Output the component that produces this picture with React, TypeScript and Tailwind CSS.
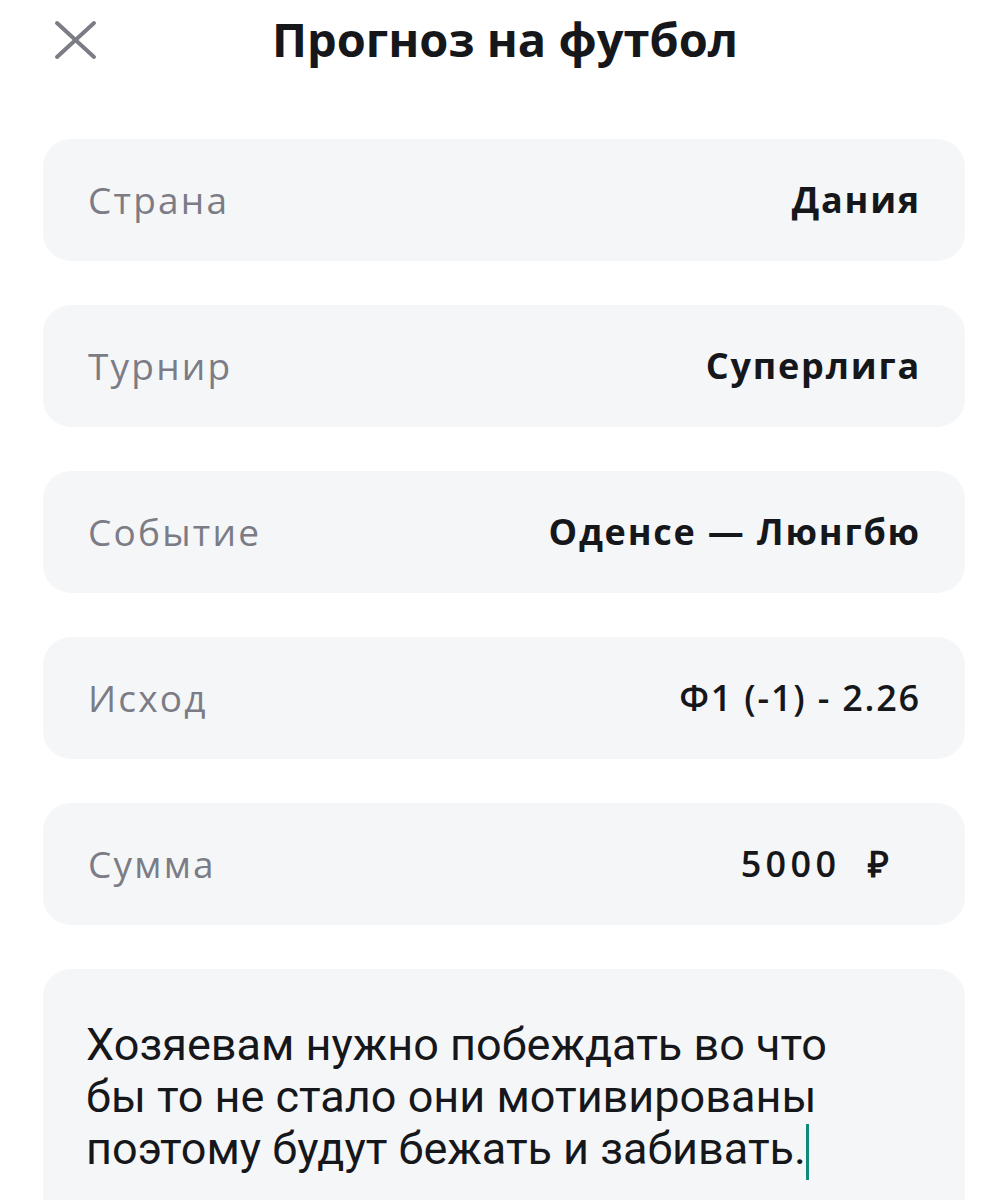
import React from "react";

const rows = [
    { label: "Страна", value: "Дания", weight: "font-bold" },
    { label: "Турнир", value: "Суперлига", weight: "font-bold" },
    { label: "Событие", value: "Оденсе — Люнгбю", weight: "font-bold" },
    { label: "Исход", value: "Ф1 (-1) - 2.26", weight: "font-semibold" },
    { label: "Сумма", value: "5000\u00a0\u00a0₽", weight: "font-semibold", pad: true },
];

const CloseIcon = () => (
    <svg width="46" height="40" viewBox="0 0 46 40" fill="none" stroke="#7b7c85" strokeWidth="4" strokeLinecap="round">
        <path d="M4 3 L41 37" />
        <path d="M41 3 L4 37" />
    </svg>
);

export default function App() {
    return (
        <div className="min-h-[1200px] w-[1000px] bg-white overflow-hidden" style={{ fontFamily: '"Open Sans", sans-serif' }}>
            <div className="relative flex h-[84px] items-center justify-center">
                <button className="absolute left-[53px] top-[20px]" aria-label="Close">
                    <CloseIcon />
                </button>
                <h1 className="text-[47px] font-bold text-[#16171b] pl-[10px] mb-[6px]">Прогноз на футбол</h1>
            </div>
            <div className="flex flex-col gap-[44px] pl-[43px] pr-[35px] pt-[55px]">
                {rows.map(row => (
                    <div key={row.label} className="flex h-[122px] items-center justify-between rounded-[28px] bg-[#f5f6f8] pl-[45px] pr-[44px]">
                        <span className="text-[37px] tracking-[0.06em] text-[#7b7c85]">{row.label}</span>
                        <span className={`text-[36px] text-[#16171b] ${row.weight} ${row.pad ? "pr-[28px] tracking-[0.12em]" : "tracking-[0.05em]"}`}>{row.value}</span>
                    </div>
                ))}
                <div className="rounded-t-[28px] bg-[#f5f6f8] pl-[43px] pt-[50px] h-[260px]">
                    <p className="text-[45px] leading-[52px] text-[#16171b]" style={{ fontFamily: 'Roboto, sans-serif' }}>
                        Хозяевам нужно побеждать во что
                        <br />
                        бы то не стало они мотивированы
                        <br />
                        поэтому будут бежать и забивать.
                        <span className="inline-block w-[3px] h-[56px] bg-[#0f8a7a] align-middle" />
                    </p>
                </div>
            </div>
        </div>
    );
}
